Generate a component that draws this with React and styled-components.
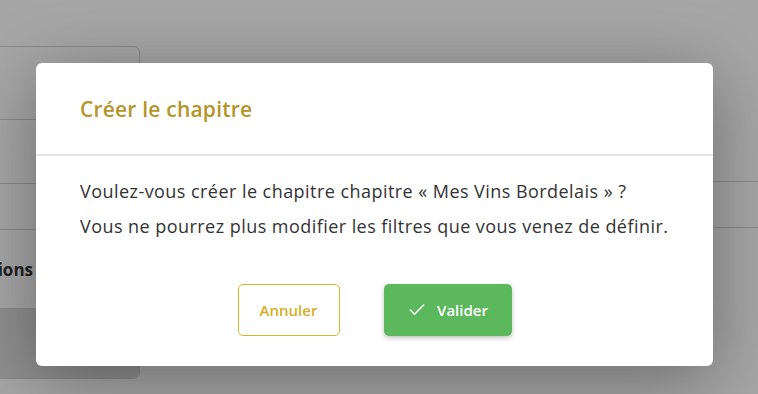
import React from 'react';
import styled, { createGlobalStyle } from 'styled-components';
import { Check } from 'lucide-react';

const GlobalStyle = createGlobalStyle`
  html, body { margin: 0; padding: 0; background: #fff; }
  body { font-family: "Open Sans", "Noto Sans", sans-serif; overflow: hidden; }
`;

const Page = styled.div`
  position: relative;
  width: 758px; height: 394px; overflow: hidden;
  display: flex; align-items: flex-start;
  background: #fff;
`;

const SideCard = styled.div`
  margin: 46px 0 0 -44px;
  width: 182px; height: 331px;
  border: 1px solid #d4d4d4; border-radius: 6px;
  display: flex; flex-direction: column; overflow: hidden;
  flex-shrink: 0;
`;

const SideRow = styled.div`
  height: ${({ $h }) => $h}px;
  border-bottom: 1px solid #d4d4d4;
  display: flex; align-items: center; justify-content: flex-end;
  padding-right: 106px;
  font-weight: 700; font-size: 17px; color: #333;
`;

const SideFooter = styled.div`
  flex: 1; background: #dcdcdc;
`;

const Main = styled.div`
  flex: 1; margin-top: 181px;
`;

const MainRow = styled.div`
  height: 45px; border-top: 1px solid #d4d4d4;
  &:last-child { height: 0; }
`;

const Overlay = styled.div`
  position: absolute; inset: 0;
  background: rgba(0, 0, 0, 0.35);
`;

const Modal = styled.div`
  position: absolute; left: 36px; top: 63px; width: 677px; height: 303px;
  background: #fff; border-radius: 6px;
  box-shadow: 0 14px 70px rgba(0, 0, 0, 0.35);
  display: flex; flex-direction: column;
`;

const Header = styled.div`
  height: 91px; padding: 0 44px;
  display: flex; align-items: center;
  border-bottom: 2px solid #e4e4e4;
`;

const Title = styled.h2`
  margin: 0; font-size: 21px; font-weight: 600; color: #b3952a;
  letter-spacing: 0.2px;
`;

const Body = styled.div`
  padding: 18px 44px 0;
  font-size: 18px; line-height: 35px; color: #333;
  letter-spacing: 0.45px;
`;

const Actions = styled.div`
  margin-top: 40px;
  display: flex; justify-content: center; gap: 44px;
`;

const Button = styled.button`
  height: 52px; border-radius: 5px;
  font-family: inherit; font-size: 15px; font-weight: 600;
  display: inline-flex; align-items: center; justify-content: center; gap: 10px;
  cursor: pointer;
  ${({ $primary }) => $primary ? `
    width: 128px; background: #5cb85c; color: #fff; border: none;
    box-shadow: 0 2px 5px rgba(0,0,0,0.25);
  ` : `
    width: 102px; background: #fff; color: #d3ae27; border: 1px solid #d9b630;
  `}
`;

export default function App() {
  return (
    <>
      <GlobalStyle />
      <Page>
        <SideCard>
          <SideRow $h={72} />
          <SideRow $h={63} />
          <SideRow $h={45} />
          <SideRow $h={78}>Actions</SideRow>
          <SideFooter />
        </SideCard>
        <Main>
          <MainRow />
          <MainRow />
        </Main>
        <Overlay />
        <Modal>
          <Header>
            <Title>Créer le chapitre</Title>
          </Header>
          <Body>
            Voulez-vous créer le chapitre chapitre « Mes Vins Bordelais » ?<br />
            Vous ne pourrez plus modifier les filtres que vous venez de définir.
          </Body>
          <Actions>
            <Button>Annuler</Button>
            <Button $primary><Check size={20} strokeWidth={1.75} />Valider</Button>
          </Actions>
        </Modal>
      </Page>
    </>
  );
}
